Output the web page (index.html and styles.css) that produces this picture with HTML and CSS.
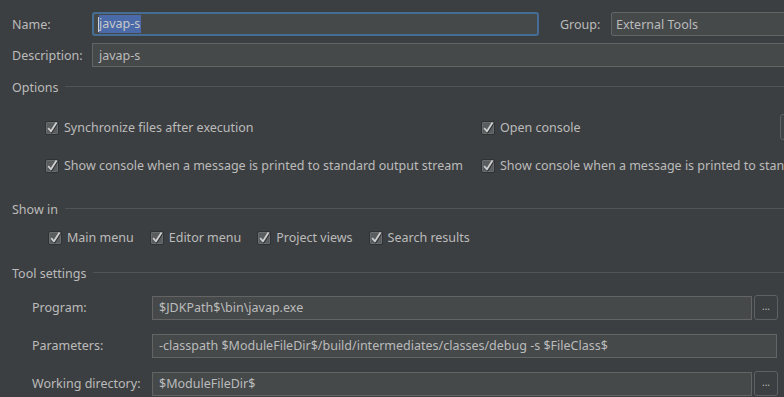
FILE: index.html
```html
<!DOCTYPE html>
<html>
<head>
<meta charset="utf-8">
<link rel="stylesheet" href="styles.css">
</head>
<body>
<div class="dialog">
  <div class="top-row">
    <label class="lbl">Name:</label>
    <div class="input focus name-input"><span class="caret"></span><span class="sel">javap-s</span></div>
    <label class="group-lbl">Group:</label>
    <div class="input combo">External Tools</div>
  </div>
  <div class="top-row desc-row">
    <label class="lbl">Description:</label>
    <div class="input desc-input">javap-s</div>
  </div>

  <div class="section options-title"><span>Options</span></div>
  <div class="opts">
    <div class="opt-row first">
      <div class="cb col1"><svg class="box" viewBox="0 0 16 16"><rect x="1.5" y="2.5" width="13" height="13" rx="1.5" fill="#5a5d5f" stroke="#2f3234"/><rect x="2.5" y="3.5" width="11" height="11" rx="1" fill="none" stroke="#6f7274" stroke-width="0.8"/><path d="M4.8 10 L7.6 13.1 L13.2 4.2" fill="none" stroke="#2a2c2e" stroke-width="2"/><path d="M4.2 9.2 L7 12.3 L12.6 3.4" fill="none" stroke="#d0d0d0" stroke-width="1.8" stroke-linejoin="round"/></svg><span>Synchronize files after execution</span></div>
      <div class="cb col2"><svg class="box" viewBox="0 0 16 16"><rect x="1.5" y="2.5" width="13" height="13" rx="1.5" fill="#5a5d5f" stroke="#2f3234"/><rect x="2.5" y="3.5" width="11" height="11" rx="1" fill="none" stroke="#6f7274" stroke-width="0.8"/><path d="M4.8 10 L7.6 13.1 L13.2 4.2" fill="none" stroke="#2a2c2e" stroke-width="2"/><path d="M4.2 9.2 L7 12.3 L12.6 3.4" fill="none" stroke="#d0d0d0" stroke-width="1.8" stroke-linejoin="round"/></svg><span>Open console</span></div>
      <div class="edge-btn"></div>
    </div>
    <div class="opt-row second">
      <div class="cb col1"><svg class="box" viewBox="0 0 16 16"><rect x="1.5" y="2.5" width="13" height="13" rx="1.5" fill="#5a5d5f" stroke="#2f3234"/><rect x="2.5" y="3.5" width="11" height="11" rx="1" fill="none" stroke="#6f7274" stroke-width="0.8"/><path d="M4.8 10 L7.6 13.1 L13.2 4.2" fill="none" stroke="#2a2c2e" stroke-width="2"/><path d="M4.2 9.2 L7 12.3 L12.6 3.4" fill="none" stroke="#d0d0d0" stroke-width="1.8" stroke-linejoin="round"/></svg><span>Show console when a message is printed to standard output stream</span></div>
      <div class="cb col2"><svg class="box" viewBox="0 0 16 16"><rect x="1.5" y="2.5" width="13" height="13" rx="1.5" fill="#5a5d5f" stroke="#2f3234"/><rect x="2.5" y="3.5" width="11" height="11" rx="1" fill="none" stroke="#6f7274" stroke-width="0.8"/><path d="M4.8 10 L7.6 13.1 L13.2 4.2" fill="none" stroke="#2a2c2e" stroke-width="2"/><path d="M4.2 9.2 L7 12.3 L12.6 3.4" fill="none" stroke="#d0d0d0" stroke-width="1.8" stroke-linejoin="round"/></svg><span>Show console when a message is printed to stan</span></div>
    </div>
  </div>

  <div class="section showin-title"><span>Show in</span></div>
  <div class="showin">
    <div class="cb"><svg class="box" viewBox="0 0 16 16"><rect x="1.5" y="2.5" width="13" height="13" rx="1.5" fill="#5a5d5f" stroke="#2f3234"/><rect x="2.5" y="3.5" width="11" height="11" rx="1" fill="none" stroke="#6f7274" stroke-width="0.8"/><path d="M4.8 10 L7.6 13.1 L13.2 4.2" fill="none" stroke="#2a2c2e" stroke-width="2"/><path d="M4.2 9.2 L7 12.3 L12.6 3.4" fill="none" stroke="#d0d0d0" stroke-width="1.8" stroke-linejoin="round"/></svg><span>Main menu</span></div>
    <div class="cb"><svg class="box" viewBox="0 0 16 16"><rect x="1.5" y="2.5" width="13" height="13" rx="1.5" fill="#5a5d5f" stroke="#2f3234"/><rect x="2.5" y="3.5" width="11" height="11" rx="1" fill="none" stroke="#6f7274" stroke-width="0.8"/><path d="M4.8 10 L7.6 13.1 L13.2 4.2" fill="none" stroke="#2a2c2e" stroke-width="2"/><path d="M4.2 9.2 L7 12.3 L12.6 3.4" fill="none" stroke="#d0d0d0" stroke-width="1.8" stroke-linejoin="round"/></svg><span>Editor menu</span></div>
    <div class="cb"><svg class="box" viewBox="0 0 16 16"><rect x="1.5" y="2.5" width="13" height="13" rx="1.5" fill="#5a5d5f" stroke="#2f3234"/><rect x="2.5" y="3.5" width="11" height="11" rx="1" fill="none" stroke="#6f7274" stroke-width="0.8"/><path d="M4.8 10 L7.6 13.1 L13.2 4.2" fill="none" stroke="#2a2c2e" stroke-width="2"/><path d="M4.2 9.2 L7 12.3 L12.6 3.4" fill="none" stroke="#d0d0d0" stroke-width="1.8" stroke-linejoin="round"/></svg><span>Project views</span></div>
    <div class="cb"><svg class="box" viewBox="0 0 16 16"><rect x="1.5" y="2.5" width="13" height="13" rx="1.5" fill="#5a5d5f" stroke="#2f3234"/><rect x="2.5" y="3.5" width="11" height="11" rx="1" fill="none" stroke="#6f7274" stroke-width="0.8"/><path d="M4.8 10 L7.6 13.1 L13.2 4.2" fill="none" stroke="#2a2c2e" stroke-width="2"/><path d="M4.2 9.2 L7 12.3 L12.6 3.4" fill="none" stroke="#d0d0d0" stroke-width="1.8" stroke-linejoin="round"/></svg><span>Search results</span></div>
  </div>

  <div class="section tool-title"><span>Tool settings</span></div>
  <div class="tools">
    <div class="tool-row">
      <label class="tlbl">Program:</label>
      <div class="input tinput short">$JDKPath$\bin\javap.exe</div>
      <div class="browse">...</div>
    </div>
    <div class="tool-row">
      <label class="tlbl">Parameters:</label>
      <div class="input tinput long">-classpath $ModuleFileDir$/build/intermediates/classes/debug -s $FileClass$</div>
    </div>
    <div class="tool-row">
      <label class="tlbl">Working directory:</label>
      <div class="input tinput short">$ModuleFileDir$</div>
      <div class="browse">...</div>
    </div>
  </div>
</div>
</body>
</html>
```

FILE: styles.css
```css
html, body {
  margin: 0;
  padding: 0;
  background: #3c3f41;
  overflow: hidden;
}
body {
  width: 784px;
  height: 397px;
  font-family: "Noto Sans", "Open Sans", "Liberation Sans", sans-serif;
  font-size: 12.5px;
  color: #bbbbbb;
}
.dialog {
  width: 784px;
  overflow: hidden;
  padding-top: 12px;
}
.top-row {
  display: flex;
  align-items: center;
  height: 24px;
  white-space: nowrap;
}
.desc-row { margin-top: 7px; }
.lbl {
  width: 80px;
  padding-left: 12px;
  flex: none;
}
.input {
  box-sizing: border-box;
  height: 24px;
  background: #45494a;
  border: 1px solid #646464;
  display: flex;
  align-items: center;
  padding-left: 6px;
  flex: none;
  white-space: nowrap;
  overflow: hidden;
}
.name-input {
  width: 447px;
  border: 2px solid #466d94;
  border-radius: 3px;
  padding-left: 4px;
}
.caret {
  display: inline-block;
  width: 1px;
  height: 15px;
  background: #d0d0d0;
}
.sel {
  background: #4a6aa9;
  color: #c8c8c8;
  height: 18px;
  line-height: 18px;
  padding-right: 1px;
}
.group-lbl {
  margin-left: 21px;
  width: 51px;
  flex: none;
}
.combo {
  width: 200px;
  border-radius: 2px;
  padding-left: 4px;
}
.desc-input { width: 700px; }

.section {
  display: flex;
  align-items: center;
  padding-left: 12px;
  height: 16px;
  white-space: nowrap;
}
.section::after {
  content: "";
  flex: 1;
  border-top: 1px solid #515456;
  margin-left: 7px;
  margin-top: -2px;
}
.options-title { margin-top: 12px; }
.opt-row {
  display: flex;
  align-items: center;
  height: 24px;
  white-space: nowrap;
  position: relative;
}
.opt-row.first { margin-top: 20px; }
.opt-row.second { margin-top: 14px; }
.cb {
  display: flex;
  align-items: center;
  flex: none;
  white-space: nowrap;
}
.cb .box {
  width: 16px;
  height: 16px;
  margin-right: 4px;
  flex: none;
}
.opt-row .col1 {
  width: 480px;
  padding-left: 44px;
  box-sizing: border-box;
}
.edge-btn {
  position: absolute;
  left: 780px;
  top: -1px;
  width: 20px;
  height: 26px;
  box-sizing: border-box;
  border: 1px solid #5e6163;
  border-radius: 3px;
  background: #404345;
}
.showin-title { margin-top: 24px; }
.showin {
  display: flex;
  align-items: center;
  height: 24px;
  margin-top: 8px;
  padding-left: 47px;
  gap: 15px;
}
.tool-title { margin-top: 16px; }
.tools {
  margin-top: 14px;
}
.tool-row {
  display: flex;
  align-items: center;
  height: 25px;
  margin-bottom: 13px;
}
.tlbl {
  width: 120px;
  padding-left: 32px;
  flex: none;
  white-space: nowrap;
}
.tinput { height: 24px; }
.tinput.short { width: 600px; }
.tinput.long { width: 625px; }
.browse {
  box-sizing: border-box;
  width: 24px;
  height: 25px;
  margin-left: 2px;
  border: 1px solid #5e6163;
  border-radius: 3px;
  background: #3c3f41;
  display: flex;
  align-items: center;
  justify-content: center;
  font-size: 10px;
  color: #bbbbbb;
  padding-bottom: 3px;
}
```
